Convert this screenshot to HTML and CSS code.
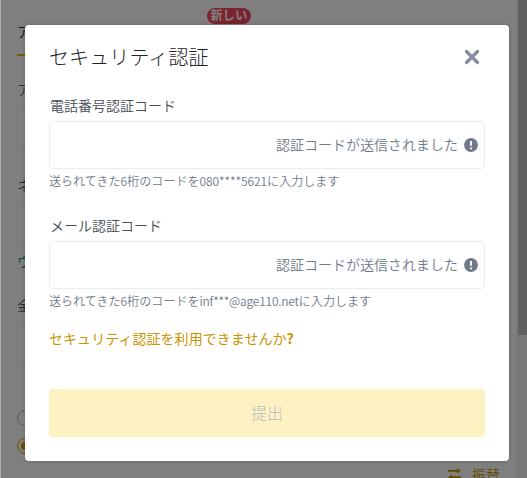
FILE: index.html
```html
<!DOCTYPE html>
<html lang="ja">
<head>
<meta charset="utf-8">
<title>セキュリティ認証</title>
<link rel="stylesheet" href="styles.css">
</head>
<body>
<div class="page">
  <main class="form">
    <div class="tabs"><span class="tab">ア</span><span class="badge">新しい</span></div>
    <div class="label">ア</div>
    <div class="box"></div>
    <div class="label">ネ</div>
    <div class="box"></div>
    <div class="note">ウ</div>
    <div class="label">金</div>
    <div class="box"></div>
    <div class="radios"><i class="radio"></i><i class="radio on"></i></div>
    <div class="transfer">
      <svg width="14" height="12" viewBox="0 0 14 12"><path d="M0 2.800h10M3 9.200h10" stroke="currentColor" stroke-width="1.800"/><path d="M9 0l4 2.800-4 2.800zM4 6.400L0 9.200l4 2.800z" fill="currentColor"/></svg>
      <span>振替</span>
    </div>
  </main>
  <div class="scrollbar"><div class="thumb"></div></div>
</div>
<div class="backdrop">
  <section class="modal">
    <header class="head">
      <h1>セキュリティ認証</h1>
      <svg width="16" height="16" viewBox="0 0 16 16"><path d="M2.500 2.500l11 11M13.500 2.500l-11 11" stroke="#848e9c" stroke-width="3.200" stroke-linecap="round"/></svg>
    </header>
    <div class="field">
      <div class="name">電話番号認証コード</div>
      <div class="input"><span>認証コードが送信されました</span><svg width="14" height="14" viewBox="0 0 14 14"><circle cx="7" cy="7" r="6.900" fill="#707a8a"/><path d="M7 3v4.800M7 9.400v1.800" stroke="#fff" stroke-width="1.900"/></svg></div>
      <div class="hint">送られてきた6桁のコードを<span class="phone">080****5621</span>に入力します</div>
    </div>
    <div class="field">
      <div class="name">メール認証コード</div>
      <div class="input"><span>認証コードが送信されました</span><svg width="14" height="14" viewBox="0 0 14 14"><circle cx="7" cy="7" r="6.900" fill="#707a8a"/><path d="M7 3v4.800M7 9.400v1.800" stroke="#fff" stroke-width="1.900"/></svg></div>
      <div class="hint">送られてきた6桁のコードを<span class="mail">inf***@age110.net</span>に入力します</div>
    </div>
    <div class="help">セキュリティ認証を利用できませんか<b>?</b></div>
    <div class="submit">提出</div>
  </section>
</div>
</body>
</html>
```
FILE: styles.css
```css
* { box-sizing: border-box; }
body {
  margin: 0;
  width: 527px;
  height: 478px;
  overflow: hidden;
  position: relative;
  background: #fff;
  font-family: "Noto Sans CJK JP", sans-serif;
  font-weight: 350;
  color: #1e2329;
}
svg { display: block; fill: none; flex: none; }
.page { display: flex; height: 478px; border-left: 1px solid #aaacab; }
.form { flex: 1; padding-left: 16px; }
.tabs { display: flex; height: 56px; align-items: flex-start; }
.tab { width: 100px; height: 56px; padding-top: 21px; font-size: 14px; line-height: 20px; border-bottom: 2px solid #f0b90b; }
.badge { margin: 8px 0 0 90px; width: 44px; height: 16px; border-radius: 8px; background: #f6465d; color: #fff; font-size: 12px; line-height: 14px; font-weight: 700; letter-spacing: .3px; text-align: center; }
.label { margin: 23px 0 5px; font-size: 14px; line-height: 20px; font-weight: 300; }
.box { width: 468px; height: 48px; border: 1px solid #eaecef; border-radius: 4px; }
.note { margin-top: 3px; height: 21px; font-size: 14px; line-height: 20px; font-weight: 400; color: #03a66d; }
.radios { display: flex; flex-direction: column; gap: 12px; margin-top: 42px; }
.radio { width: 16px; height: 16px; border: 1px solid #aeb4bc; border-radius: 50%; }
.radio.on { border-color: #d9a30a; background: radial-gradient(circle, #d9a30a 4px, transparent 4.5px); }
.transfer { display: flex; align-items: center; justify-content: flex-end; gap: 10px; width: 483px; height: 20px; margin-top: 10px; font-size: 14px; color: #c99400; }
.scrollbar { width: 11px; padding-left: 2px; background: #f1f1f1; }
.thumb { height: 335px; background: #c1c1c1; }
.backdrop { position: absolute; top: 0; left: 1px; width: 526px; height: 478px; padding: 25px 0 0 24px; background: rgba(0, 0, 0, .5); }
.modal { width: 484px; height: 436px; padding: 16px 24px 24px; background: #fff; border-radius: 4px; box-shadow: 0 0 4px rgba(0, 0, 0, .2); }
.head { display: flex; align-items: center; justify-content: space-between; height: 32px; padding-right: 5px; }
h1 { margin: 0; font-size: 20px; line-height: 32px; font-weight: 300; letter-spacing: .1px; }
.field { height: 120px; padding-top: 22px; }
.name { height: 26px; padding-left: 1px; font-size: 14px; line-height: 20px; color: #474d57; }
.input { display: flex; align-items: center; justify-content: flex-end; gap: 6px; height: 48px; padding-right: 6px; border: 1px solid #eaecef; border-radius: 4px; font-size: 14px; color: #707a8a; }
.input span { padding-bottom: 2px; }
.hint { font-size: 12px; line-height: 24px; white-space: nowrap; letter-spacing: .05px; color: #707a8a; }
.phone { letter-spacing: -.06px; }
.mail { letter-spacing: -.22px; }
.help { height: 20px; margin-top: 15px; font-size: 14px; line-height: 20px; font-weight: 400; letter-spacing: .05px; color: #c99400; }
.help b { font-weight: 700; }
.submit { height: 48px; margin-top: 41px; border-radius: 4px; background: #fef1c2; color: #b7bdc6; font-size: 16px; line-height: 46px; font-weight: 300; text-align: center; }
```
